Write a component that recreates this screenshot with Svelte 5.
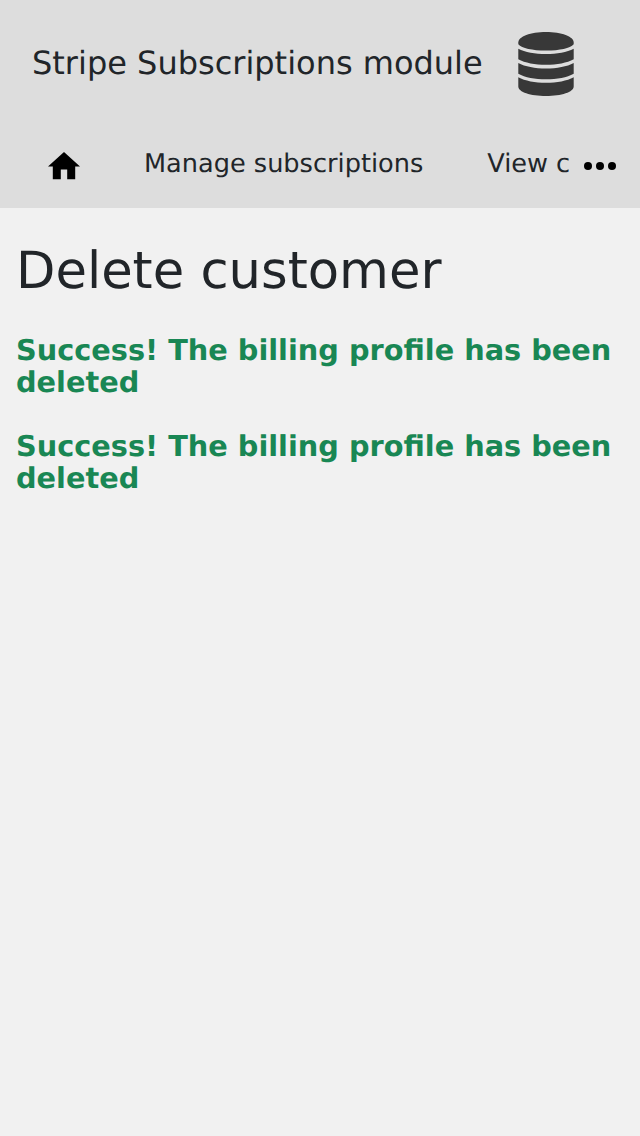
<script>
  const links = ['Manage subscriptions', 'View customers'];
  const messages = [
    'Success! The billing profile has been deleted',
    'Success! The billing profile has been deleted'
  ];
</script>

<div class="page">
  <header>
    <div class="brand">
      <span>Stripe Subscriptions module</span>
      <svg width="56" height="64" viewBox="0 0 56 64" fill="#383838" aria-hidden="true">
        <path d="M.3 10.500C.3 4.500 12.500 0 28 0s27.700 4.500 27.700 10.500v1.800C52 16.300 42 18.600 28 18.600S4 16.300.3 12.300z" />
        <path d="M.3 16.700C7 20.200 17 22 28 22s21-1.800 27.700-5.300V27.300C49 31 39 32.800 28 32.800S7 31 .3 27.300z" />
        <path d="M.3 31C7 34.600 17 36.500 28 36.500s21-1.900 27.700-5.500V41.700C49 45.400 39 47.300 28 47.300S7 45.400.3 41.700z" />
        <path d="M.3 45.200C7 48.800 17 50.800 28 50.800s21-2 27.700-5.600V54.500C55.700 60 43.500 64 28 64S.3 60 .3 54.500z" />
      </svg>
    </div>
    <nav>
      <a class="home" href="#home" aria-label="Home">
        <svg width="32" height="28" viewBox="0 0 32 28"><path d="M12.800 27.200v-9.600h6.400v9.600h8V14.400H32L16 0 0 14.400h4.800v12.800z" /></svg>
      </a>
      <div class="links">
        {#each links as link}<a href="#top">{link}</a>{/each}
      </div>
      <button aria-label="More"><svg width="32" height="8"><circle cx="4" cy="4" r="4" /><circle cx="16" cy="4" r="4" /><circle cx="28" cy="4" r="4" /></svg></button>
    </nav>
  </header>
  <main>
    <h1>Delete customer</h1>
    {#each messages as message}<p>{message}</p>{/each}
  </main>
</div>

<style>
  :global(body) { background: #f1f1f1; }
  .page { min-height: 1136px; background: #f1f1f1; color: #212529; font-family: "DejaVu Sans", sans-serif; text-rendering: geometricPrecision; overflow: hidden; }
  header { height: 208px; background: #ddd; }
  .brand { display: flex; height: 64px; padding: 32px; gap: 35px; font-size: 32px; line-height: 62px; white-space: nowrap; }
  nav { display: flex; height: 80px; }
  .home { padding: 24px 48px 0; width: 32px; flex: none; }
  .links { display: flex; gap: 64px; width: 425px; margin-left: 16px; overflow: hidden; white-space: nowrap; font-size: 25.6px; line-height: 72px; }
  .links a { color: inherit; text-decoration: none; }
  button { border: 0; background: none; padding: 0 0 6px 15px; }
  h1 { margin: 0; font-size: 51.2px; line-height: 62px; font-weight: 400; }
  main { padding: 32px 16px; }
  p { margin: 32px 0 0; color: #198754; font-size: 28.77px; line-height: 32px; font-weight: 700; }
</style>
